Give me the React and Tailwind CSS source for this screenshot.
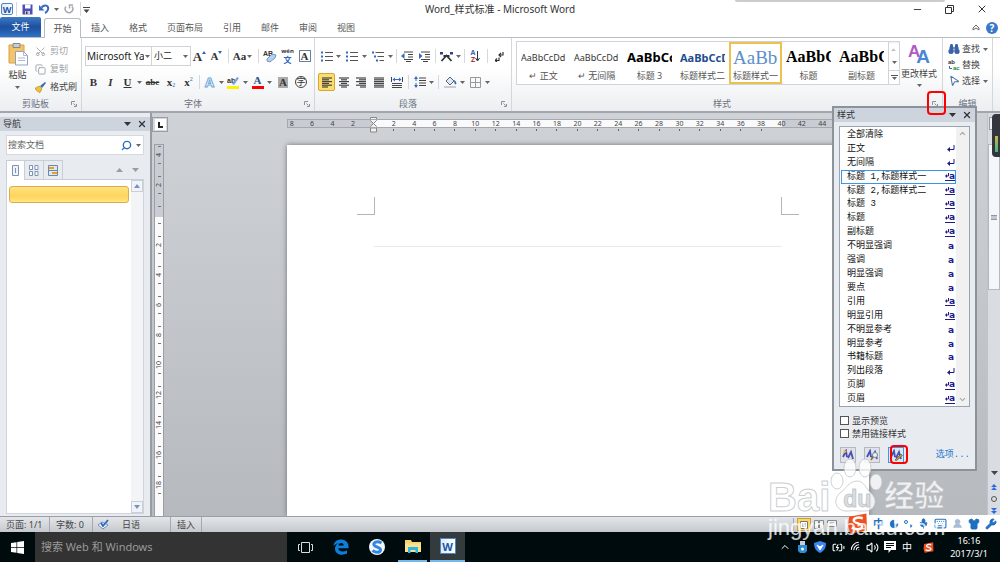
import React from 'react';
import {
    Minus, X, Search, ChevronUp, ChevronDown, Scissors, Copy, Binoculars, MousePointer2,
    Wrench, Shirt, Mic, Keyboard, UserRound, Moon, Wifi, Volume2, BatteryCharging, MessageSquareText,
} from 'lucide-react';

const tabs = ['插入', '格式', '页面布局', '引用', '邮件', '审阅', '视图'];

const gallery = [
    { name: '↵ 正文', sample: 'AaBbCcDd', style: 'text-[9px] text-[#333]' },
    { name: '↵ 无间隔', sample: 'AaBbCcDd', style: 'text-[9px] text-[#333]' },
    { name: '标题 3', sample: 'AaBbCc', style: 'text-[13px] font-bold text-black' },
    { name: '标题样式二', sample: 'AaBbCcD', style: 'text-[11px] font-bold text-[#1f4e8f]' },
    { name: '标题样式一', sample: 'AaBbC', style: "font-['Liberation_Serif',serif] text-[19px] text-[#5b8fc9]", active: true },
    { name: '标题', sample: 'AaBbC', style: "font-['Liberation_Serif',serif] text-[16px] font-bold text-black" },
    { name: '副标题', sample: 'AaBbC', style: "font-['Liberation_Serif',serif] text-[16px] font-bold text-black" },
];

const styleList = [
    ['全部清除', ''],
    ['正文', 'para'],
    ['无间隔', 'para'],
    ['标题 1,标题样式一', 'link'],
    ['标题 2,标题样式二', 'link'],
    ['标题 3', 'link'],
    ['标题', 'link'],
    ['副标题', 'link'],
    ['不明显强调', 'char'],
    ['强调', 'char'],
    ['明显强调', 'char'],
    ['要点', 'char'],
    ['引用', 'link'],
    ['明显引用', 'link'],
    ['不明显参考', 'char'],
    ['明显参考', 'char'],
    ['书籍标题', 'char'],
    ['列出段落', 'para'],
    ['页脚', 'link'],
    ['页眉', 'link'],
];

const hMarks = Array.from({ length: 29 }, (_, i) => (i - 4) * 2);
const vMarks = [4, 2, 0, 2, 4, 6, 8, 10, 12, 14, 16, 18];

const Caret = ({ className = 'w-[7px]' }) => (
    <span className={`flex shrink-0 items-center justify-center ${className}`}>
        <svg width="5" height="3" viewBox="0 0 5 3"><path d="M0 0h5L2.5 3z" fill="#666" /></svg>
    </span>
);

const Sep = ({ className = 'w-[6px]' }) => (
    <span className={`flex shrink-0 justify-center ${className}`}>
        <span className="h-[14px] w-px bg-[#d5d8dc]" />
    </span>
);

const Tool = ({ label, className = 'w-[17px]', children }) => (
    <button aria-label={label} title={label} className={`flex h-[18px] shrink-0 items-center justify-center leading-none ${className}`}>
        {children}
    </button>
);

const Group = ({ title, className, launcher = true, children }) => (
    <section className={`flex shrink-0 flex-col justify-between border-r border-[#d3d6da] ${className}`}>
        {children}
        <div className="flex h-[15px] items-center text-[#6b7280]">
            <span className="flex-1 text-center">{title}</span>
            {launcher && (
                <button aria-label={`${title}设置`} className="mr-1">
                    <svg width="6" height="6" viewBox="0 0 6 6" fill="none" stroke="#8b9098"><path d="M.5 4V.5H4M2.500 2.500l2 2M5.500 3v2.500H3" /></svg>
                </button>
            )}
        </div>
    </section>
);

/* rows of text lines, used by every alignment button */
const Lines = ({ rows }) => (
    <svg width="12" height="11" viewBox="0 0 12 11" stroke="#444" strokeWidth="1.200">
        {rows.map(([a, b], i) => <path key={i} d={`M${a} ${1 + i * 1.8}H${b}`} />)}
    </svg>
);

const alignLeft = [[1, 11], [1, 8], [1, 11], [1, 8], [1, 11], [1, 7]];
const alignCenter = [[1, 11], [3, 9], [1, 11], [3, 9], [1, 11], [3, 9]];
const alignRight = [[1, 11], [4, 11], [1, 11], [4, 11], [1, 11], [5, 11]];
const justify = [[1, 11], [1, 11], [1, 11], [1, 11], [1, 11], [1, 11]];

const WordIcon = ({ className }) => (
    <span className={`flex items-center justify-center border border-[#4c86c6] bg-[linear-gradient(to_right,#dcebfa,#fff)] font-bold leading-none text-[#1d54a8] ${className}`}>W</span>
);

const SogouIcon = ({ size }) => (
    <svg width={size} height={size} viewBox="0 0 20 20">
        <path d="M2 3.500L18.500.500 19 17 3 19.500 1 12z" fill="#f0501f" />
        <path d="M15 5C10 3.500 6 5 6.500 7.500S15 10 14.500 13 8 16 4.500 14" fill="none" stroke="#fff" strokeWidth="2.400" />
    </svg>
);

const TitleBar = () => (
    <header className="flex h-[18px] items-center">
        <div className="flex flex-1 items-center">
            <WordIcon className="ml-px h-[12px] w-[12px] rounded-[2px] text-[9px]" />
            <Sep />
            <Tool label="保存">
                <svg width="11" height="11" viewBox="0 0 11 11"><path d="M.5.5h10v10H.5z" fill="#4c4fb5" /><path d="M3 .5h5.500v4H3z" fill="#fff" /><path d="M3 7h5v3.500H3z" fill="#ccd" /><path d="M4 7.500h1.500V10H4z" fill="#335" /></svg>
            </Tool>
            <Tool label="撤消">
                <svg width="11" height="10" viewBox="0 0 11 10" fill="none"><path d="M2.500 3.500C6-.5 10 2 9 5.500 8.500 7.500 7 8.500 6 9" stroke="#3569c4" strokeWidth="2" /><path d="M0 1v5.500h5.500z" fill="#3569c4" /></svg>
            </Tool>
            <Caret />
            <Tool label="恢复">
                <svg width="10" height="10" viewBox="0 0 10 10" fill="none" stroke="#a6a9ae" strokeWidth="1.500"><path d="M2 2.500a3.800 3.800 0 1 0 6 0M5.500 4.500V1H9" /></svg>
            </Tool>
            <Sep />
            <button aria-label="自定义快速访问工具栏">
                <svg width="7" height="7" viewBox="0 0 7 7" fill="#444"><path d="M0 1h7v1H0zM.5 3.500h6L3.500 7z" /></svg>
            </button>
        </div>
        <h1 className="text-[10px] text-[#333]">Word_样式标准 - Microsoft Word</h1>
        <div className="flex flex-1 items-center justify-end gap-[22px] text-[#333]">
            <button aria-label="最小化"><Minus size={11} strokeWidth={2} /></button>
            <button aria-label="还原">
                <svg width="9" height="9" viewBox="0 0 9 9" fill="none" stroke="#333"><path d="M.5 2.500h6v6h-6zM2.500 2.500v-2h6v6h-2" /></svg>
            </button>
            <button aria-label="关闭" className="mr-[12px]"><X size={12} strokeWidth={2} /></button>
        </div>
    </header>
);

const TabBar = () => (
    <nav className="flex h-[20px] items-end border-b border-[#b9bdc3] text-[#555]">
        <button className="h-[20px] w-[41px] rounded-t-[2px] bg-[linear-gradient(#3f7ac5,#1c4f9f_50%,#2f72c4)] text-white">文件</button>
        <button className="relative -mb-px ml-[3px] h-[20px] w-[37px] rounded-t-[3px] border border-b-0 border-[#b9bdc3] bg-white">开始</button>
        {tabs.map((tab) => (
            <button key={tab} className="h-[19px] px-[10px]">{tab}</button>
        ))}
        <div className="flex h-[19px] flex-1 items-center justify-end gap-[6px] pr-[2px]">
            <button aria-label="折叠功能区"><svg width="8" height="7" viewBox="0 0 8 7" fill="none" stroke="#666"><path d="M1 4l3-3 3 3v2L4 4 1 6z" /></svg></button>
            <button aria-label="帮助" className="h-[12px] w-[12px] rounded-full bg-[#3a78c9] text-[10px] font-bold leading-none text-white">?</button>
        </div>
    </nav>
);

const ClipboardGroup = () => (
    <Group title="剪贴板" className="w-[82px]">
        <div className="flex pt-[4px]">
            <button className="flex w-[35px] flex-col items-center gap-px leading-[14px] text-[#444]">
                <svg width="22" height="25" viewBox="0 0 22 25">
                    <path d="M2 3h15v18H2z" fill="#f4c469" stroke="#d9a040" />
                    <path d="M6 1.500h7v4H6z" fill="#c9ccd0" stroke="#888" />
                    <path d="M8.500 9.500h8l4 4v9.500h-12z" fill="#fff" stroke="#8fa3c0" />
                    <path d="M16.500 9.500v4h4M11 16h7M11 18.500h7" fill="none" stroke="#a9bad2" />
                </svg>
                <span>粘贴</span>
                <Caret className="h-[8px] w-[7px]" />
            </button>
            <div className="flex flex-col text-[#a0a3a8]">
                <button className="flex h-[18px] items-center gap-1"><Scissors className="-rotate-90" size={11} strokeWidth={2} />剪切</button>
                <button className="flex h-[18px] items-center gap-1"><Copy size={11} strokeWidth={2} />复制</button>
                <button className="flex h-[18px] items-center gap-1 text-[#444]">
                    <svg width="11" height="11" viewBox="0 0 11 11"><path d="M1 6l3-2 3 3-2 3.500C3 10 1 8.500 0 6z" fill="#f1c232" stroke="#a57f1d" strokeWidth=".6" /><path d="M5 4l2 2 4-5-1-1z" fill="#4468a8" /></svg>
                    格式刷
                </button>
            </div>
        </div>
    </Group>
);

const FontGroup = () => (
    <Group title="字体" className="w-[233px]">
        <div className="flex flex-col gap-[6px] pl-[3px] pt-[8px] text-[#333]">
            <div className="flex h-[20px] items-center">
                <div className="flex h-[20px] w-[67px] items-center border border-[#d0d4d9] bg-white">
                    <select aria-label="字体" className="w-[58px] appearance-none overflow-hidden pl-px text-[10px] text-[#222]"><option>Microsoft Ya</option></select>
                    <Caret />
                </div>
                <div className="flex h-[20px] w-[39px] items-center border border-l-0 border-[#d0d4d9] bg-white">
                    <select aria-label="字号" className="w-[30px] appearance-none pl-[2px] text-[#222]"><option>小二</option></select>
                    <Caret />
                </div>
                <Tool label="增大字体">
                    <span className="font-['Liberation_Serif',serif] text-[13px] font-bold">A</span>
                    <svg className="mb-[8px]" width="4" height="3" viewBox="0 0 4 3"><path d="M0 3h4L2 0z" fill="#2f66b5" /></svg>
                </Tool>
                <Tool label="缩小字体">
                    <span className="font-['Liberation_Serif',serif] text-[11px] font-bold">A</span>
                    <svg className="mb-[8px]" width="4" height="3" viewBox="0 0 4 3"><path d="M0 0h4L2 3z" fill="#2f66b5" /></svg>
                </Tool>
                <Sep />
                <Tool label="更改大小写" className="w-[24px]"><span className="font-['Liberation_Serif',serif] text-[11px] font-bold">Aa</span><Caret /></Tool>
                <Sep />
                <Tool label="清除格式" className="w-[18px]">
                    <svg width="14" height="13" viewBox="0 0 14 13"><text x="0" y="6" fontSize="7" fontWeight="bold" fill="#333" fontFamily="Liberation Sans">AB</text><path d="M4 9l5-5 4 1-1 3-5 4-3-1z" fill="#b9cff0" stroke="#5b82bd" strokeWidth=".8" /></svg>
                </Tool>
                <Tool label="拼音指南" className="w-[17px] flex-col"><span className="text-[6px] leading-[7px] font-bold">wén</span><span className="text-[8px] font-bold leading-[9px] text-[#2b63c0]">文</span></Tool>
                <Tool label="字符边框"><span className="flex h-[12px] w-[12px] items-center justify-center border border-[#6a7f9e] font-['Liberation_Serif',serif] text-[11px] font-bold">A</span></Tool>
            </div>
            <div className="flex h-[20px] items-center font-['Liberation_Serif','Noto_Sans_CJK_SC',serif] text-[11px]">
                <Tool label="加粗"><b>B</b></Tool>
                <Tool label="倾斜"><i className="font-bold">I</i></Tool>
                <Tool label="下划线"><u className="font-bold">U</u></Tool>
                <Caret />
                <Tool label="删除线" className="w-[19px]"><s className="text-[9px] font-bold">abc</s></Tool>
                <Tool label="下标" className="w-[18px]"><b>x</b><span className="mt-[6px] text-[6px] text-[#2f66b5]">2</span></Tool>
                <Tool label="上标"><b>x</b><span className="mb-[6px] text-[6px] text-[#2f66b5]">2</span></Tool>
                <Sep className="w-[4px]" />
                <Tool label="文本效果"><span className="font-['Noto_Sans',sans-serif] text-[13px] font-bold text-white [-webkit-text-stroke:1px_#6fa8dc]">A</span></Tool>
                <Caret />
                <Tool label="突出显示">
                    <svg width="13" height="13" viewBox="0 0 13 13"><text x="0" y="7" fontSize="7" fontWeight="bold" fill="#333" fontFamily="Liberation Sans">ab</text><path d="M5 8l5-7 2 1-5 7z" fill="#7fa3d8" /><path d="M0 10h12v3H0z" fill="#fff200" /></svg>
                </Tool>
                <Caret />
                <Tool label="字体颜色"><span className="flex h-[13px] w-[12px] items-center justify-center border-b-[3px] border-[#ff0000] font-bold text-[#2a4f8f]">A</span></Tool>
                <Caret />
                <Tool label="字符底纹" className="w-[20px]"><span className="flex h-[11px] w-[10px] items-center justify-center bg-[#aaa] font-bold">A</span></Tool>
                <Tool label="带圈字符" className="w-[16px]"><span className="flex h-[12px] w-[12px] items-center justify-center rounded-full border border-[#444] text-[9px]">字</span></Tool>
            </div>
        </div>
    </Group>
);

const ListIcon = ({ kind }) => (
    <svg width="12" height="11" viewBox="0 0 12 11">
        {[1.5, 5.5, 9.5].map((y, i) => (
            <g key={y}>
                <path d={`M${kind === 'multi' ? i * 2 : 0} ${y - 1}h2v2h-2z`} fill="#3569c4" />
                <path d={`M${kind === 'multi' ? 3.5 + i * 2 : 4} ${y}H12`} stroke="#555" />
            </g>
        ))}
    </svg>
);

const IndentIcon = ({ d }) => (
    <svg width="13" height="11" viewBox="0 0 13 11"><path d="M3 1h9M7 3.500h5M7 6h5M3 8.500h9M5 10.500h5" stroke="#444" strokeWidth="1.200" /><path d={d} fill="#3569c4" /></svg>
);

const ParagraphGroup = () => (
    <Group title="段落" className="w-[197px]">
        <div className="flex flex-col gap-[6px] pl-[3px] pt-[8px]">
            <div className="flex h-[20px] items-center">
                <Tool label="项目符号"><ListIcon /></Tool>
                <Caret />
                <Tool label="编号" className="w-[19px]"><ListIcon /></Tool>
                <Caret />
                <Tool label="多级列表" className="w-[19px]"><ListIcon kind="multi" /></Tool>
                <Caret className="w-[6px]" />
                <Sep />
                <Tool label="减少缩进量"><IndentIcon d="M0 5l3.500-3v6z" /></Tool>
                <Tool label="增加缩进量"><IndentIcon d="M4.500 5L1 2v6z" /></Tool>
                <Sep className="w-[4px]" />
                <Tool label="中文版式" className="w-[18px]">
                    <svg width="15" height="11" viewBox="0 0 15 11"><path d="M2.500 10l5-5.500 5 5.500M4.500 5h6" fill="none" stroke="#333" strokeWidth="1.800" /><path d="M1 1h3v2.500H1zM11 1h3v2.500h-3z" fill="#2a3fa0" /></svg>
                </Tool>
                <Caret />
                <Sep className="w-[5px]" />
                <Tool label="排序">
                    <span className="flex flex-col text-[7px] font-bold leading-[7px]"><span className="text-[#3569c4]">A</span><span className="text-[#a33]">Z</span></span>
                    <svg width="5" height="11" viewBox="0 0 5 11"><path d="M2.500 0v9M.5 7l2 3 2-3" fill="none" stroke="#333" /></svg>
                </Tool>
                <Sep />
                <Tool label="显示编辑标记" className="w-[18px]">
                    <svg width="9" height="11" viewBox="0 0 9 11"><path d="M8 1v3H4M6 2L4 4l2 2M4 6.500v3H0M2 7.500L0 9.500l2 1.500" fill="none" stroke="#333" strokeWidth="1.200" /></svg>
                </Tool>
            </div>
            <div className="flex h-[20px] items-center">
                <Tool label="左对齐" className="w-[17px] rounded-[2px] border border-[#d5a53a] bg-[#fcdd6c]"><Lines rows={alignLeft} /></Tool>
                <Tool label="居中"><Lines rows={alignCenter} /></Tool>
                <Tool label="右对齐" className="w-[18px]"><Lines rows={alignRight} /></Tool>
                <Tool label="两端对齐" className="w-[18px]"><Lines rows={justify} /></Tool>
                <Tool label="分散对齐">
                    <svg width="12" height="11" viewBox="0 0 12 11"><path d="M1 6.500h10M1 8.500h10M1 10.500h10" stroke="#444" strokeWidth="1.200" /><path d="M.5 0v5M11.500 0v5" stroke="#444" /><path d="M1.500 2.500L4 .5v4zM10.500 2.500L8 .5v4zM4 2h4v1H4z" fill="#3569c4" /></svg>
                </Tool>
                <Sep />
                <Tool label="行距">
                    <svg width="12" height="12" viewBox="0 0 12 12"><path d="M5 2h7M5 4.500h7M5 7h7M5 9.500h7" stroke="#444" /><path d="M2 0l2 3H0zM2 12L0 9h4zM1.500 3h1v2h-1zM1.500 7h1v2h-1z" fill="#3569c4" /></svg>
                </Tool>
                <Caret />
                <Sep />
                <Tool label="底纹" className="w-[18px]">
                    <svg width="13" height="12" viewBox="0 0 13 12"><path d="M2 5l4-4 4 4-4 4z" fill="#dfe8f5" stroke="#567" /><path d="M10 4c2 1 3 3 2 4.500-1.500 0-2-2-2-4.500z" fill="#3569c4" /><path d="M0 10h12v2H0z" fill="#ccc" /></svg>
                </Tool>
                <Caret />
                <Tool label="边框" className="w-[18px]">
                    <svg width="11" height="11" viewBox="0 0 11 11" fill="none" stroke="#999"><path d="M.5.5h10v10H.5zM5.500.5v10M.5 5.500h10" /></svg>
                </Tool>
                <Caret />
            </div>
        </div>
    </Group>
);

const StylesGroup = () => (
    <Group title="样式" className="min-w-[431px] flex-1">
        <div className="flex pl-[4px] pr-[4px] pt-[3px]">
            <div className="flex h-[44px] border border-[#d0d4d9] bg-white">
                {gallery.map((item) => (
                    <button
                        key={item.name}
                        className={`flex w-[53px] flex-col items-center overflow-hidden border-2 px-[2px] text-[#555] ${item.active ? 'border-[#ecc14e]' : 'border-transparent'}`}
                    >
                        <span className={`flex h-[26px] w-full shrink-0 items-center overflow-hidden whitespace-nowrap leading-none ${item.style}`}>{item.sample}</span>
                        <span className="whitespace-nowrap leading-[12px]">{item.name}</span>
                    </button>
                ))}
                <div className="flex w-[11px] flex-col divide-y divide-[#d0d4d9] border-l border-[#d0d4d9]">
                    <button aria-label="上一行" className="flex flex-1 rotate-180 items-center justify-center opacity-40"><Caret /></button>
                    <button aria-label="下一行" className="flex flex-1 items-center justify-center"><Caret /></button>
                    <button aria-label="其他" className="flex flex-1 items-center justify-center"><span className="flex flex-col gap-px border-t border-[#555] pt-px"><Caret /></span></button>
                </div>
            </div>
            <button className="flex flex-1 flex-col items-center whitespace-nowrap leading-[14px] text-[#444]">
                <span className="flex h-[26px] items-center font-['Liberation_Sans',sans-serif] font-bold leading-none">
                    <span className="mb-[5px] text-[17px] text-[#b05bc0]">A</span>
                    <span className="-ml-[4px] mt-[4px] text-[19px] text-[#4c86d6]">A</span>
                </span>
                <span>更改样式</span>
                <Caret className="h-[8px] w-[7px]" />
            </button>
        </div>
    </Group>
);

const EditGroup = () => (
    <Group title="编辑" className="mr-[8px] w-[50px]" launcher={false}>
        <div className="flex flex-col pl-[5px] pt-[3px] text-[#444]">
            <button className="flex h-[16px] items-center gap-[2px]"><Binoculars size={12} className="fill-[#3b64a8] text-[#3b64a8]" />查找<Caret /></button>
            <button className="flex h-[16px] items-center gap-[2px]">
                <svg width="12" height="12" viewBox="0 0 12 12" fontFamily="Liberation Sans" fontWeight="bold" fontSize="6"><text x="0" y="5" fill="#333">ab</text><text x="5" y="11" fill="#2c8a3c">ac</text><path d="M1.500 7v2.500h2.500" fill="none" stroke="#3569c4" /></svg>
                替换
            </button>
            <button className="flex h-[16px] items-center gap-[2px]"><MousePointer2 size={12} className="rotate-12 fill-white text-[#4a6ea8]" />选择<Caret /></button>
        </div>
    </Group>
);

const PaneHeader = ({ title }) => (
    <div className="flex h-[14px] items-center bg-[#cdd4dd] pl-[3px] pr-[3px] text-[#333]">
        <h2 className="flex-1">{title}</h2>
        <button aria-label="选项菜单" className="mr-[6px]"><svg width="7" height="4" viewBox="0 0 7 4"><path d="M0 0h7L3.500 4z" fill="#333" /></svg></button>
        <button aria-label="关闭"><X size={10} strokeWidth={3} /></button>
    </div>
);

const NavigationPane = () => (
    <aside className="flex w-[152px] shrink-0 flex-col border-r-2 border-[#989da4] bg-[#e8ecf1] pt-[4px]">
        <PaneHeader title="导航" />
        <div className="mx-[6px] mt-[4px] flex h-[20px] items-center border border-[#d5d9df] bg-white pr-[1px]">
            <input aria-label="搜索文档" placeholder="搜索文档" className="min-w-0 flex-1 px-px outline-none placeholder:text-[#666]" />
            <button aria-label="搜索" className="-scale-x-100 text-[#2f6bc0]"><Search size={11} strokeWidth={3} /></button>
            <Caret className="ml-[3px] w-[7px]" />
        </div>
        <div className="mx-[6px] mt-[5px] flex h-[20px] items-stretch">
            <button aria-label="浏览标题" className="flex w-[19px] items-center justify-center border border-b-0 border-[#c9ced5] bg-white">
                <svg width="7" height="11" viewBox="0 0 7 11"><path d="M.5.5h6v10h-6z" fill="#eef3fa" stroke="#7d93b5" /><path d="M3 3h1v5H3z" fill="#7d93b5" /></svg>
            </button>
            <button aria-label="浏览页面" className="flex w-[19px] items-center justify-center border-r border-t border-b border-[#c9ced5]">
                <svg width="10" height="11" viewBox="0 0 10 11" fill="#fff" stroke="#7d93b5"><path d="M.5.5h3v4h-3zM6 .5h3v4H6zM.5 6.500h3v4h-3zM6 6.500h3v4H6z" /></svg>
            </button>
            <button aria-label="浏览搜索结果" className="flex w-[19px] items-center justify-center border-r border-t border-b border-[#c9ced5]">
                <svg width="10" height="11" viewBox="0 0 10 11"><path d="M.5.5h9v10h-9z" fill="#dce6f4" stroke="#6f86aa" /><path d="M1 2h5v2H1zM4 7h5v2H4z" fill="#e8a317" /><path d="M1 5.500h8" stroke="#6f86aa" /></svg>
            </button>
            <div className="flex flex-1 items-center justify-end gap-[9px] border-b border-[#c9ced5] pr-[5px]">
                <button aria-label="上一处"><svg width="7" height="4" viewBox="0 0 7 4"><path d="M0 4h7L3.500 0z" fill="#9a9da3" /></svg></button>
                <button aria-label="下一处"><svg width="7" height="4" viewBox="0 0 7 4"><path d="M0 0h7L3.500 4z" fill="#9a9da3" /></svg></button>
            </div>
        </div>
        <div className="mx-[6px] mb-[2px] flex flex-1 border border-t-0 border-[#d0d4da] bg-white">
            <div className="flex-1 px-[2px] pt-[6px]">
                <button aria-label="当前标题" className="block h-[17px] w-full rounded-[3px] border border-[#dcae4b] bg-[linear-gradient(#ffe27f,#ffd45e_60%,#ffe680)]" />
            </div>
            <div className="flex w-[12px] flex-col justify-between bg-[#f3f4f6]">
                <button aria-label="向上滚动" className="flex h-[12px] items-center justify-center border border-[#c9ced8] bg-[#f0f3f8]"><svg width="6" height="4" viewBox="0 0 6 4"><path d="M0 4h6L3 0z" fill="#7d8fc0" /></svg></button>
                <button aria-label="向下滚动" className="flex h-[12px] items-center justify-center border border-[#c9ced8] bg-[#f0f3f8]"><svg width="6" height="4" viewBox="0 0 6 4"><path d="M0 0h6L3 4z" fill="#7d8fc0" /></svg></button>
            </div>
        </div>
    </aside>
);

const VerticalRuler = () => (
    <div className="flex w-[16px] shrink-0 flex-col items-start pt-[4px]">
        <button aria-label="制表符" className="flex h-[15px] w-[16px] items-center justify-center border border-[#989da4] bg-[#d5d8dc]">
            <svg width="11" height="11" viewBox="0 0 11 11"><path d="M0 0h11v11H0z" fill="#fff" /><path d="M4 3v5h4" fill="none" stroke="#222" strokeWidth="2" /></svg>
        </button>
        <div className="ml-[2px] mt-[12px] min-h-0 w-[10px] flex-1 overflow-hidden border border-b-0 border-[#9a9fa6] bg-[linear-gradient(#c9cdd3_72px,#fafafa_72px)]">
            <div className="-mt-[5px] flex flex-col">
                {vMarks.map((n, i) => (
                    <div key={i} className="flex h-[30px] flex-col items-center justify-between py-[6px] text-[7px] leading-[6px] text-[#444]">
                        <span className="h-px w-[3px] bg-[#777]" />
                        <span className="-rotate-90">{n || ''}</span>
                        <span className="h-px w-[3px] bg-[#777]" />
                    </div>
                ))}
            </div>
        </div>
    </div>
);

const DocumentArea = () => (
    <main className="flex min-w-0 flex-1 flex-col items-center overflow-hidden">
        <div className="mt-[6px] h-[9px] w-[582px] bg-[linear-gradient(to_right,#c9cdd3_87px,#fafafa_87px,#fafafa_495px,#c9cdd3_495px)] outline outline-1 -outline-offset-1 outline-[#a5a9af]">
            <div className="-mx-[5px] flex text-[7px] leading-[9px] text-[#444]">
                {hMarks.map((n) => (
                    <div key={n} className="flex w-0 flex-1 flex-col items-center">
                        {n === 0 ? (
                            <svg className="-mt-[2px]" width="7" height="16" viewBox="0 0 7 16" fill="#f2f2f2" stroke="#888"><path d="M.5.500h6v3l-3 3-3-3zM3.500 6.500l3 3v1h-6v-1zM.5 11h6v4h-6z" /></svg>
                        ) : (
                            <>
                                <span>{Math.abs(n)}</span>
                                {n > 0 && n < 40 && <span className="mt-px h-[2px] w-px bg-[#666]" />}
                            </>
                        )}
                    </div>
                ))}
            </div>
        </div>
        <article aria-label="文档页面" className="mt-[17px] w-[582px] flex-1 bg-white shadow-[0_0_5px_#6b6f75]">
            <div className="flex justify-between px-[70px] pt-[52px]">
                <span className="h-[18px] w-[18px] border-b border-r border-[#b5b5b5]" />
                <span className="h-[18px] w-[18px] border-b border-l border-[#b5b5b5]" />
            </div>
            <hr className="mx-[87px] mt-[31px] border-[#e6ebf0]" />
        </article>
    </main>
);

const PageScrollbar = () => (
    <div className="flex w-[13px] shrink-0 flex-col items-center border-l border-[#c0c4ca] bg-[#d9dce1] pt-[4px]">
        <button aria-label="标尺" className="h-[13px] w-[11px] border border-[#989da4] bg-[#eef0f3]" />
        <div className="flex w-full flex-1 flex-col pt-[14px]">
            <div className="flex h-[146px] items-center justify-center border border-[#b3b8c2] bg-[#f4f6fa]">
                <span className="h-[5px] w-[6px] border-y border-[#8f96a5] bg-[#c3c8d2]" />
            </div>
        </div>
        <div className="flex flex-col items-center gap-[6px] pb-[2px] pt-[2px] text-[#2f6be0]">
            <button aria-label="向下" className="mb-[2px]"><svg width="7" height="5" viewBox="0 0 7 5"><path d="M0 0h7L3.500 4z" fill="#444" /></svg></button>
            <button aria-label="前一页"><svg width="6" height="6" viewBox="0 0 6 6" fill="currentColor"><path d="M0 3h6L3 0zM0 6h6L3 3z" /></svg></button>
            <button aria-label="选择浏览对象" className="h-[6px] w-[6px] rounded-full border border-[#555]" />
            <button aria-label="下一页"><svg width="6" height="6" viewBox="0 0 6 6" fill="currentColor"><path d="M0 0h6L3 3zM0 3h6L3 6z" /></svg></button>
        </div>
    </div>
);

const StyleMark = ({ kind }) => {
    if (kind === 'para') {
        return <svg width="8" height="7" viewBox="0 0 8 7"><path d="M7 0v4.500H2" fill="none" stroke="#1c1c8c" /><path d="M0 4.500L3 2v5z" fill="#1c1c8c" /></svg>;
    }
    if (kind === 'char') return <span className="mr-px text-[9px] font-bold leading-none">a</span>;
    if (kind === 'link') {
        return (
            <span className="flex h-[9px] items-center border-b border-[#1c1c8c] text-[9px] font-bold leading-none">
                <svg width="4" height="6" viewBox="0 0 4 6"><path d="M3.500 0v3H1" fill="none" stroke="#1c1c8c" /><path d="M0 3l2-2v4z" fill="#1c1c8c" /></svg>a
            </span>
        );
    }
    return null;
};

const AaIcon = ({ children }) => (
    <svg width="13" height="12" viewBox="0 0 13 12">
        <path d="M1 8l3-6 1 6M6 9l3-6 2 7" fill="none" stroke="#4a4fb5" strokeWidth="1.800" />
        {children}
    </svg>
);

const StylesPane = () => (
    <aside className="absolute right-[23px] top-[106px] z-10 flex w-[145px] flex-col border-2 border-[#8c9299] bg-[#e8ecf1] pb-[6px]">
        <PaneHeader title="样式" />
        <div className="mx-[5px] mt-[4px] flex h-[281px] border border-[#9aa3b0] bg-white">
            <ul className="flex flex-1 flex-col pl-px pt-px font-['Liberation_Mono','Noto_Sans_CJK_SC',monospace] text-[#111]">
                {styleList.map(([name, kind]) => (
                    <li key={name} className="flex h-0 flex-1">
                        <button className={`flex w-full items-center justify-between whitespace-nowrap border pl-[5px] leading-[12px] ${name.startsWith('标题 1') ? 'border-[#3a96e8]' : 'border-transparent'}`}>
                            {name}
                            <span className="font-['DejaVu_Sans',sans-serif] text-[#1c1c8c]"><StyleMark kind={kind} /></span>
                        </button>
                    </li>
                ))}
            </ul>
            <div className="flex w-[13px] flex-col items-center justify-between bg-[#f1f1f1] py-[2px] text-[#aaa]">
                <button aria-label="向上滚动"><ChevronUp size={9} strokeWidth={3} /></button>
                <button aria-label="向下滚动"><ChevronDown size={9} strokeWidth={3} /></button>
            </div>
        </div>
        <div className="ml-[6px] mt-[7px] flex flex-col text-[#333]">
            {['显示预览', '禁用链接样式'].map((text) => (
                <label key={text} className="flex h-[13px] items-center gap-[3px]">
                    <input type="checkbox" className="h-[9px] w-[9px] appearance-none border border-[#555] bg-white" />{text}
                </label>
            ))}
        </div>
        <div className="ml-[6px] mt-[7px] flex items-center gap-[8px]">
            <button aria-label="新建样式" className="flex h-[16px] w-[16px] items-center justify-center border border-[#b5b9bf] bg-[#dfe3e8]"><AaIcon><path d="M2 0l1 2 2 0-2 2-2 0z" fill="#f2c037" /></AaIcon></button>
            <button aria-label="样式检查器" className="flex h-[16px] w-[16px] items-center justify-center border border-[#b5b9bf] bg-[#dfe3e8]"><AaIcon><circle cx="9" cy="6" r="2.500" fill="#eaf3fb" stroke="#7a8797" /><path d="M7 8l-2 3" stroke="#9a6a2a" strokeWidth="1.500" /></AaIcon></button>
            <button aria-label="管理样式" className="relative flex h-[16px] w-[16px] items-center justify-center border border-[#3a96e8] bg-[#d5e8f8]">
                <AaIcon><path d="M5 11l6-6 1.500 1.500-6 5z" fill="#c79a3a" stroke="#5a4520" strokeWidth=".6" /></AaIcon>
                <span className="absolute -right-[5px] -top-[3px] h-[19px] w-[18px] rounded-[4px] border-2 border-[#f00]" />
            </button>
            <a href="#options" className="ml-auto mr-[5px] font-['Liberation_Mono','Noto_Sans_CJK_SC',monospace] leading-[12px] text-[#2477c9]">选项...</a>
        </div>
    </aside>
);

const StatusBar = () => (
    <footer className="flex h-[16px] shrink-0 items-center border-t border-[#9a9fa6] bg-[linear-gradient(#e3e6e9,#c5c9ce)] text-[#444]">
        <button className="h-full w-[50px] border-r border-[#a5a9af] pl-[6px] text-left leading-none">页面: 1/1</button>
        <button className="h-full w-[43px] border-r border-[#a5a9af] pl-[6px] text-left leading-none">字数: 0</button>
        <button aria-label="校对" className="w-[29px] pl-[4px]">
            <svg width="13" height="11" viewBox="0 0 13 11"><path d="M1 6l4-3 6 3-5 4z" fill="#f5f8fc" stroke="#6e8ec4" /><path d="M4 4l2 3 5-6" fill="none" stroke="#2f66c5" strokeWidth="1.800" /></svg>
        </button>
        <button className="h-full w-[49px] border-r border-[#a5a9af] text-left leading-none">日语</button>
        <button className="h-full w-[31px] border-r border-[#a5a9af] text-center leading-none">插入</button>
        <div className="ml-auto mr-[138px] flex w-[69px] items-center gap-[3px] border-l border-[#a5a9af] pl-[3px]">
            <button aria-label="页面视图" className="flex h-[13px] w-[14px] items-center justify-center border border-[#cf9f32] bg-[#fbd763]"><svg width="8" height="8" viewBox="0 0 8 8" fill="#fff" stroke="#777"><path d="M.5.500h7v7h-7zM2 3h4M2 5h4" /></svg></button>
            <button aria-label="阅读视图"><svg width="10" height="9" viewBox="0 0 10 9" fill="#eee" stroke="#888"><path d="M.5.500h4v8h-4zM5.500.500h4v8h-4z" /></svg></button>
            <button aria-label="Web 视图"><svg width="10" height="9" viewBox="0 0 10 9" fill="#eee" stroke="#888"><path d="M.5.500h9v6h-9zM3 3h4" /></svg></button>
        </div>
    </footer>
);

/* floating input method toolbar */
const ImeBar = () => (
    <div className="absolute bottom-[30px] right-0 z-20 flex h-[17px] w-[138px] items-center justify-between bg-white pl-[11px] pr-[3px] text-[#1f6fc0]">
        <button aria-label="搜狗输入法" className="absolute -left-[15px] -top-[2px]"><SogouIcon size={21} /></button>
        <button className="text-[11px] font-bold leading-none">中</button>
        <button aria-label="半角"><Moon size={10} fill="currentColor" /></button>
        <button aria-label="中文标点">
            <svg width="9" height="9" viewBox="0 0 9 9"><circle cx="2" cy="3" r="1.500" fill="none" stroke="currentColor" /><path d="M6 5h2.500v2L6.500 9z" fill="currentColor" /></svg>
        </button>
        <button aria-label="语音"><Mic size={11} fill="currentColor" /></button>
        <button aria-label="软键盘"><Keyboard size={13} strokeWidth={2} /></button>
        <button aria-label="登录" className="text-[#a9bdd6]"><UserRound size={11} fill="currentColor" /></button>
        <button aria-label="皮肤"><Shirt size={12} fill="currentColor" /></button>
        <button aria-label="工具箱"><Wrench size={12} fill="currentColor" /></button>
    </div>
);

const Watermark = () => (
    <div aria-hidden="true" className="pointer-events-none absolute bottom-[21px] right-[52px] z-30 w-[180px] font-['Liberation_Sans','Noto_Sans_CJK_SC',sans-serif] text-white/80">
        <div className="flex items-end font-bold leading-none [-webkit-text-stroke:1px_rgba(180,184,190,0.7)]">
            <span className="text-[40px] leading-[38px]">Bai</span>
            <span className="relative h-[58px] w-[54px]">
                <svg width="54" height="56" viewBox="0 0 54 56" fill="#fff" fillOpacity=".8" stroke="#b9bdc2" strokeOpacity=".7">
                    <ellipse cx="7" cy="23" rx="6" ry="8" /><ellipse cx="20" cy="10" rx="6" ry="9" /><ellipse cx="35" cy="10" rx="6" ry="9" /><ellipse cx="46" cy="24" rx="6" ry="8" />
                    <path d="M27 23c7 0 9 8 14 12 7 6 5 17-5 18-6 .5-12-1-18 0-12 1-16-11-8-18C16 31 19 23 27 23z" />
                </svg>
                <span className="absolute bottom-[5px] left-[13px] text-[23px] text-[#dcdee1]">du</span>
            </span>
            <span className="pb-[3px] text-[30px] leading-[34px]">经验</span>
        </div>
        <div className="-mt-px whitespace-nowrap text-[22px] leading-[26px]">jingyan.baidu.com</div>
    </div>
);

const Taskbar = () => (
    <footer className="flex h-[30px] shrink-0 items-stretch bg-[#000b0e] text-white">
        <button aria-label="开始菜单" className="flex w-[35px] items-center justify-center">
            <svg width="13" height="13" viewBox="0 0 13 13" fill="#fff"><path d="M0 2l5.500-.8V6H0zM6.200 1L13 0v6H6.200zM0 6.800h5.500v5L0 11zM6.200 6.800H13V13l-6.800-1z" /></svg>
        </button>
        <input aria-label="搜索 Web 和 Windows" placeholder="搜索 Web 和 Windows" className="w-[252px] bg-[#333] pl-[6px] text-[11px] outline-none placeholder:text-[#999]" />
        <button aria-label="任务视图" className="flex w-[36px] items-center justify-center">
            <svg width="15" height="11" viewBox="0 0 15 11" fill="none" stroke="#ddd"><path d="M3.500.5h8v10h-8zM2 2.500H.5v6H2M13 2.500h1.500v6H13" /></svg>
        </button>
        <button aria-label="Edge" className="flex w-[36px] items-center justify-center">
            <svg width="16" height="16" viewBox="0 0 16 16"><path d="M.5 7C1 2.500 4.500.5 8 .5c4.500 0 7.500 3 7.500 7v1.700H5.300c.2 2.300 2 3.300 4.400 3.300 1.600 0 3-.4 4.300-1.200v3.300c-1.400.8-3 1.100-5 1.100-4.300 0-7-2.500-7-6C2 7 3.500 5 5.500 4.200 3.500 4.400 1.700 5.500.5 7zM5.400 6.600h5.300c0-1.600-.8-2.500-2.500-2.500S5.600 5.200 5.400 6.600z" fill="#0a80dc" fillRule="evenodd" /></svg>
        </button>
        <button aria-label="搜狗浏览器" className="flex w-[36px] items-center justify-center">
            <svg width="16" height="16" viewBox="0 0 16 16"><circle cx="8" cy="8" r="8" fill="#f2f6fa" /><path d="M12.500 4C8 1.500 4 3.500 5 6s7 2 6.500 5S7 14 3.500 11.500" fill="none" stroke="#3386e0" strokeWidth="3" /></svg>
        </button>
        <button aria-label="文件资源管理器" className="mx-[3px] flex w-[29px] items-center justify-center border-b-2 border-[#76b9ed]">
            <svg width="16" height="14" viewBox="0 0 16 14"><path d="M0 1h6l1 2h9v10H0z" fill="#f5d36b" /><path d="M0 4.500h16V13H0z" fill="#fbe28c" /><path d="M3 8h10v6h-2.500v-3h-5v3H3z" fill="#2fb4e8" /></svg>
        </button>
        <button aria-label="Word" className="flex w-[35px] items-center justify-center border-b-2 border-[#76b9ed] bg-[#343b3e]"><WordIcon className="h-[16px] w-[16px] text-[11px]" /></button>
        <div className="ml-auto flex items-center">
            <button aria-label="显示隐藏的图标" className="flex w-[17px] justify-center"><ChevronUp size={12} /></button>
            <button aria-label="USB" className="flex w-[18px] justify-center"><svg width="9" height="12" viewBox="0 0 9 12"><path d="M2 0h5v4H2z" fill="#ccd" /><path d="M0 4h9v6L7 12H2l-2-2z" fill="#2b8ed0" /><circle cx="4.500" cy="8" r="1.500" fill="#fff" /></svg></button>
            <button aria-label="安全卫士" className="flex w-[18px] justify-center"><svg width="12" height="12" viewBox="0 0 12 12"><path d="M6 0l6 2c0 5-2 8-6 10C2 10 0 7 0 2z" fill="#3c86f0" /><path d="M3 4l3 2 3-2-3 5z" fill="#fff" stroke="#fff" /></svg></button>
            <button aria-label="电池" className="flex w-[18px] justify-center"><BatteryCharging size={13} /></button>
            <button aria-label="网络" className="flex w-[17px] justify-center"><Wifi size={12} className="-rotate-45" /></button>
            <button aria-label="音量" className="flex w-[17px] justify-center"><Volume2 size={13} /></button>
            <button aria-label="通知" className="flex w-[17px] justify-center">
                <svg width="12" height="12" viewBox="0 0 12 12"><path d="M0 0h12v9H7l-2.500 3V9H0z" fill="#fff" /><path d="M2 2.500h8M2 4.500h8M2 6.500h5" stroke="#000b0e" /></svg>
            </button>
            <button className="w-[18px] text-center text-[10px]">中</button>
            <button aria-label="搜狗" className="flex w-[24px] justify-center"><SogouIcon size={11} /></button>
            <time className="w-[56px] pl-[2px] text-center text-[9px] leading-[13px]">16:16<br />2017/3/1</time>
            <span className="w-[4px]" />
        </div>
    </footer>
);

const App = () => {
    return (
        <div className="relative flex h-screen flex-col overflow-hidden bg-white font-['Noto_Sans','Noto_Sans_CJK_SC',sans-serif] text-[9px]">
            <TitleBar />
            <TabBar />
            <div className="relative flex h-[75px] shrink-0 border-b-2 border-[#a2a6ac] bg-[linear-gradient(#fff,#fff_40%,#eceef1)]">
                <ClipboardGroup />
                <FontGroup />
                <ParagraphGroup />
                <StylesGroup />
                <EditGroup />
            </div>
            <div className="flex min-h-0 flex-1 bg-[linear-gradient(#cfd2d6,#b6b9be)]">
                <NavigationPane />
                <VerticalRuler />
                <DocumentArea />
                <PageScrollbar />
            </div>
            <StatusBar />
            <Taskbar />

            <StylesPane />
            <ImeBar />
            <Watermark />
            <div className="absolute right-[54px] top-[91px] z-20 h-[24px] w-[19px] rounded-[4px] border-2 border-[#f00]" />
            <div className="absolute right-[55px] top-0 h-[2px] w-[210px] rounded-b bg-[#ccc]" />
            <div className="absolute right-0 top-[114px] z-10 flex h-[43px] w-[8px] items-end justify-center rounded-l bg-[#33363f] pb-[5px]">
                <span className="h-[16px] w-[3px] bg-[linear-gradient(#c5b84a,#45b584)]" />
            </div>
        </div>
    );
};

export default App;
